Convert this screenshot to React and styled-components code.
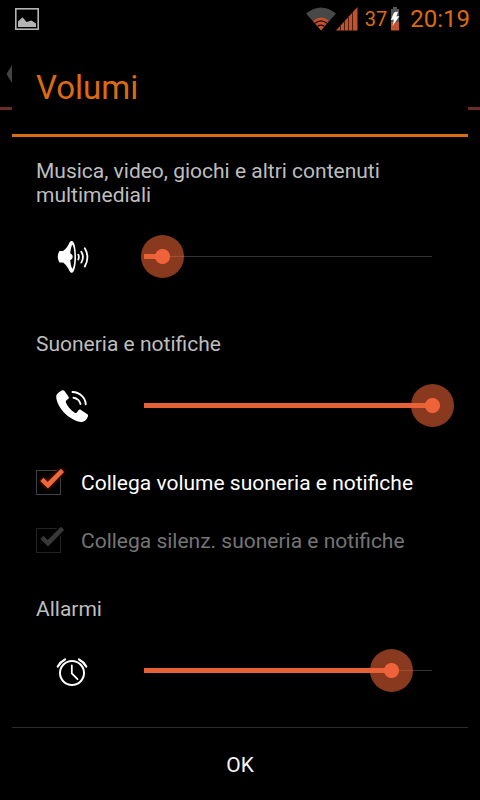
import React, { useState } from 'react';
import styled, { createGlobalStyle } from 'styled-components';

const ORANGE = '#dc6a12';
const ACCENT = '#e66236';

const GlobalStyle = createGlobalStyle`
    * {
        box-sizing: border-box;
    }

    body {
        margin: 0;
        background: #000;
        color: #bebebe;
        font-family: Roboto, "Noto Sans", sans-serif;
    }
`;

const Screen = styled.div`
    display: flex;
    flex-direction: column;
    min-height: 100vh;
`;

const StatusBar = styled.header`
    display: flex;
    align-items: center;
    justify-content: space-between;
    height: 38px;
    padding: 0 10px 0 15px;
    color: ${ORANGE};
`;

const StatusGroup = styled.div`
    display: flex;
    align-items: center;
`;

const BatteryLevel = styled.span`
    margin-left: 7px;
    font-size: 20px;
    line-height: 24px;
`;

const Clock = styled.time`
    margin-left: 10px;
    font-size: 24px;
    line-height: 28px;
`;

const BatteryIcon = styled.svg`
    margin-left: 3px;
`;

/* the settings page and the dialog share one grid cell */
const Stage = styled.main`
    display: grid;
    flex: 1;
`;

const SettingsPage = styled.div`
    grid-area: 1 / 1;
`;

const SettingsBar = styled.div`
    display: flex;
    align-items: center;
    height: 72px;
    padding: 2px 0 0 6px;
    border-bottom: 3px solid #6b2b28;
`;

const Dialog = styled.section`
    grid-area: 1 / 1;
    display: flex;
    flex-direction: column;
    margin: 0 12px;
    background: #000;
`;

const Title = styled.h1`
    margin: 0;
    padding: 30px 24px 26px;
    border-bottom: 3px solid ${ORANGE};
    color: ${ORANGE};
    font-size: 33px;
    font-weight: 400;
    line-height: 40px;
`;

const Body = styled.div`
    display: flex;
    flex: 1;
    flex-direction: column;
    padding: 22px 14px 0 24px;
`;

const VolumeGroup = styled.div`
    display: flex;
    flex-direction: column;
    gap: 28px;
    margin-bottom: ${(props) => props.$space}px;
`;

const VolumeLabel = styled.label`
    font-size: 21px;
    line-height: 24px;
`;

const VolumeRow = styled.div`
    display: flex;
    align-items: center;
    gap: 32px;
    padding-left: 18px;
    color: #fff;

    svg {
        flex: none;
    }
`;

const Slider = styled.input`
    appearance: none;
    flex: 1;
    min-width: 0;
    height: 43px;
    margin: 0;
    background: transparent;

    &::-webkit-slider-runnable-track {
        height: 43px;
        background:
            linear-gradient(${ACCENT}, ${ACCENT}) 22px 50% / calc((100% - 44px) * var(--level)) 5px no-repeat,
            linear-gradient(#343434, #343434) 22px 50% / calc(100% - 44px) 1px no-repeat;
    }

    &::-webkit-slider-thumb {
        appearance: none;
        width: 43px;
        height: 43px;
        border-radius: 50%;
        background: radial-gradient(circle, #f0633a 7px, rgba(235, 98, 52, 0.58) 8px);
    }
`;

const Checks = styled.div`
    margin-bottom: 27px;
`;

const CheckRow = styled.label`
    display: flex;
    align-items: center;
    gap: 17px;
    height: 58px;
    color: ${(props) => (props.$disabled ? '#757575' : '#fff')};
    font-size: 21px;
    line-height: 24px;
`;

const CheckCell = styled.span`
    display: grid;
    align-items: center;
    width: 28px;
    padding-bottom: 2px;

    svg {
        grid-area: 1 / 1;
        overflow: visible;
        pointer-events: none;
    }
`;

const CheckInput = styled.input`
    appearance: none;
    grid-area: 1 / 1;
    width: 25px;
    height: 25px;
    margin: 0;
    border: 1px solid #424242;

    &:disabled {
        border-color: #242424;
    }
`;

const CheckMark = styled.svg`
    color: ${(props) => (props.$disabled ? '#383838' : '#ee6839')};

    .mark {
        filter: ${(props) => (props.$disabled ? 'none' : 'drop-shadow(0 0 2px rgba(224, 72, 16, 0.6))')};
    }
`;

const OkButton = styled.button`
    height: 73px;
    padding: 2px 0 0;
    border: 0;
    border-top: 1px solid #2c2c2c;
    background: transparent;
    color: #f4f4f4;
    font: 400 21px/24px Roboto, "Noto Sans", sans-serif;
`;

function SpeakerIcon() {
    return (
        <svg width="36" height="36" viewBox="0 0 36 36" aria-hidden="true">
            <path fill="currentColor" d="M5.5 12H9C12 10 14.3 6.5 15.5 3.5C16.2 2.3 17 2 17.8 2C20.3 2 22 9 22 17.8S20.3 33.8 17.8 33.8C17 33.8 16.2 33.4 15.5 32C14.300 29 12 25.500 9 23.500H5.5C4.300 21.500 3.800 19.500 3.800 17.800S4.300 14 5.500 12Z" />
            <path fill="#000" d="M18.4 5.5C20 8 20.4 13 20.4 17.8S20 27.5 18.4 30C16.9 27.5 16.4 23.5 16.3 21C17.9 20.5 18.7 19.3 18.7 17.8S17.9 15 16.3 14.5C16.4 12 16.9 8 18.4 5.5Z" />
            <path fill="none" stroke="currentColor" strokeWidth="1.8" strokeLinecap="round" d="M24.3 15.7Q25.4 18 24.3 20.5M27.3 12.7Q30.6 18 27.3 23.6M30.8 9.2Q36 18 30.8 27.5" />
        </svg>
    );
}

function PhoneIcon() {
    return (
        <svg width="36" height="36" viewBox="0 0 36 36" aria-hidden="true">
            <path fill="currentColor" d="M2.2 8.5C2.2 6.5 4 4.5 7.8 2.6C8.9 2.1 9.8 2.2 10.5 3.1L14.4 8.4C15.2 9.5 14.9 10.3 14 11.1L12.3 12.6C11.7 13.2 11.7 13.9 12 14.7C13.5 18.5 17 22.5 20.8 24.8C21.6 25.3 22.3 25.2 22.8 24.5L24.3 22.5C25 21.5 26 21.3 27 22L33 25.9C34.1 26.6 34.4 27.4 33.9 28.5C32.7 31.5 30.5 34 27.5 34C22.5 34 14.5 29.5 9.5 24C5 19 2.2 13 2.2 8.5Z" />
            <path fill="none" stroke="currentColor" strokeWidth="1.9" strokeLinecap="round" d="M18.500 4C25.500 4.200 31.400 9.500 31.700 16.200M19.500 9.700C23 10.200 26 12.800 26.500 16" />
        </svg>
    );
}

function AlarmIcon() {
    return (
        <svg width="36" height="36" viewBox="0 0 36 36" fill="none" stroke="currentColor" strokeWidth="2" strokeLinecap="round" aria-hidden="true">
            <circle cx="18" cy="20" r="12" />
            <path strokeWidth="1.8" d="M17.8 12.5V20.5L23.5 26.2" />
            <path strokeWidth="2.2" d="M3.8 13.5C5.5 10.5 8 8 11 6.5M25 6.5C28 8 30.5 10.5 32.2 13.5" />
        </svg>
    );
}

const VOLUMES = {
    media: { label: 'Musica, video, giochi e altri contenuti multimediali', max: 15, Icon: SpeakerIcon },
    ring: { label: 'Suoneria e notifiche', max: 7, Icon: PhoneIcon },
    alarm: { label: 'Allarmi', max: 7, Icon: AlarmIcon },
};

function Volume({ name, value, onChange, space }) {
    const { label, max, Icon } = VOLUMES[name];
    return (
        <VolumeGroup $space={space}>
            <VolumeLabel htmlFor={name}>{label}</VolumeLabel>
            <VolumeRow>
                <Icon />
                <Slider
                    id={name}
                    type="range"
                    min="0"
                    max={max}
                    value={value}
                    style={{ '--level': value / max }}
                    onChange={(e) => onChange(name, Number(e.target.value))}
                />
            </VolumeRow>
        </VolumeGroup>
    );
}

function Check({ label, checked, disabled, onChange }) {
    return (
        <CheckRow $disabled={disabled}>
            <CheckCell>
                <CheckInput type="checkbox" checked={checked} disabled={disabled} onChange={onChange} />
                {checked && (
                    <CheckMark $disabled={disabled} width="28" height="28" viewBox="0 0 28 28" aria-hidden="true">
                        <path fill="#000" stroke="#000" strokeWidth="4" d="M4.5 13L7.5 10L11.7 14.2L25 1L28 4L12 20.4Z" />
                        <path className="mark" fill="currentColor" d="M4.3 13L7.5 9.8L11.7 14L25 0.800L28 4L12 20.4Z" />
                    </CheckMark>
                )}
            </CheckCell>
            {label}
        </CheckRow>
    );
}

function SystemBar() {
    return (
        <StatusBar>
            <svg width="24" height="22" viewBox="0 0 24 22" aria-label="Screenshot">
                <rect x="0.8" y="0.8" width="22.4" height="20.4" fill="none" stroke="#b4b4b4" strokeWidth="1.6" />
                <path fill="#b4b4b4" d="M3 19V13.5L7.5 9.3L11.500 14L16.5 12.500L21 15.5V19Z" />
            </svg>
            <StatusGroup>
                <svg width="30" height="24" viewBox="0 0 30 24" aria-label="Wi-Fi">
                    <path fill="#484848" d="M15 23.5L0 6.5Q15 -5.5 30 6.5Z" />
                    <path fill="#c4512c" d="M15 23.5L7.2 13.7Q15 7.5 22.8 13.7Z" />
                    <path fill="none" stroke="#160804" strokeWidth="1.2" d="M9 16.3Q15 11.5 21 16.3M11.5 19.5Q15 16.8 18.5 19.5" />
                </svg>
                <svg width="22" height="24" viewBox="0 0 22 24" aria-label="Signal">
                    <path fill="#c4512c" d="M0 23.5L21.5 0V23.5Z" />
                    <path stroke="#4a1e10" strokeWidth="1" d="M4.5 18V24M8.5 14V24M12.5 9V24M16.5 5V24" />
                </svg>
                <BatteryLevel>37</BatteryLevel>
                <BatteryIcon width="10" height="24" viewBox="0 0 10 24" aria-label="Charging">
                    <path fill="#555" d="M3 0H7V2H9V16H1V2H3Z" />
                    <path fill="#c4512c" d="M1 15H9V23.5H1Z" />
                    <path fill="#fff" d="M4 5.5L8 4.5L6.5 9.5L9.5 9L2.5 19L4 12.5L0.8 13Z" />
                </BatteryIcon>
                <Clock>20:19</Clock>
            </StatusGroup>
        </StatusBar>
    );
}

export default function App() {
    const [levels, setLevels] = useState({ media: 1, ring: 7, alarm: 6 });
    const [linked, setLinked] = useState(true);

    const setLevel = (name, value) => setLevels({ ...levels, [name]: value });

    return (
        <Screen>
            <GlobalStyle />
            <SystemBar />
            <Stage>
                <SettingsPage>
                    <SettingsBar>
                        <svg width="12" height="20" viewBox="0 0 12 20" aria-hidden="true">
                            <path fill="#444" d="M0.5 10L6 1V19Z" />
                        </svg>
                    </SettingsBar>
                </SettingsPage>
                <Dialog role="dialog" aria-labelledby="dialog-title">
                    <Title id="dialog-title">Volumi</Title>
                    <Body>
                        <Volume name="media" value={levels.media} onChange={setLevel} space={54} />
                        <Volume name="ring" value={levels.ring} onChange={setLevel} space={27} />
                        <Checks>
                            <Check
                                label="Collega volume suoneria e notifiche"
                                checked={linked}
                                onChange={() => setLinked(!linked)}
                            />
                            <Check label="Collega silenz. suoneria e notifiche" checked disabled />
                        </Checks>
                        <Volume name="alarm" value={levels.alarm} onChange={setLevel} space={35} />
                    </Body>
                    <OkButton type="button">OK</OkButton>
                </Dialog>
            </Stage>
        </Screen>
    );
}
